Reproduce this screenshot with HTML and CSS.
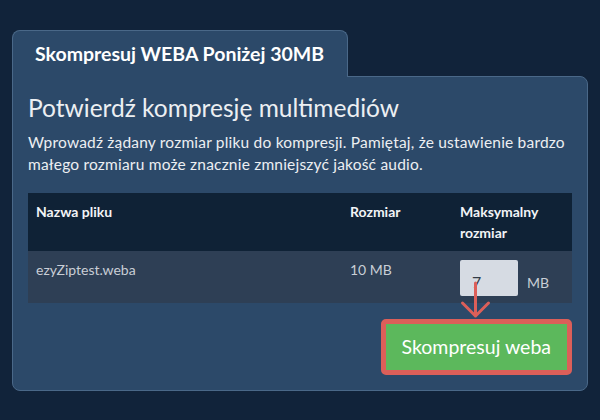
FILE: index.html
```html
<!DOCTYPE html>
<html lang="pl">
<head>
<meta charset="utf-8">
<title>Skompresuj WEBA</title>
<link rel="stylesheet" href="styles.css">
</head>
<body>
<div class="wrap">
  <div class="tab">Skompresuj WEBA Poniżej 30MB</div>
  <div class="panel">
    <h2 class="title">Potwierdź kompresję multimediów</h2>
    <p class="desc">Wprowadź żądany rozmiar pliku do kompresji. Pamiętaj, że ustawienie bardzo małego rozmiaru może znacznie zmniejszyć jakość audio.</p>
    <table class="files">
      <colgroup>
        <col class="col-name">
        <col class="col-size">
        <col class="col-max">
      </colgroup>
      <thead>
        <tr>
          <th>Nazwa pliku</th>
          <th>Rozmiar</th>
          <th>Maksymalny rozmiar</th>
        </tr>
      </thead>
      <tbody>
        <tr>
          <td>ezyZiptest.weba</td>
          <td>10 MB</td>
          <td class="c-max"><span class="field"><input class="size-input" type="text" value="7"><svg class="arrow" width="32" height="62" viewBox="0 0 32 62"><path d="M15.5 23 V56 M2.5 43 L15.5 56 L28.5 43" fill="none" stroke="#dc5f59" stroke-width="3" stroke-linecap="round" stroke-linejoin="round"/></svg></span><span class="unit">MB</span></td>
        </tr>
      </tbody>
    </table>
    <div class="actions">
      <button class="btn" type="button">Skompresuj weba</button>
    </div>
  </div>
</div>
</body>
</html>
```
FILE: styles.css
```css
html, body {
  margin: 0;
  padding: 0;
}
body {
  background: #11233a;
  font-family: Lato, "Open Sans", sans-serif;
  width: 600px;
  height: 420px;
  overflow: hidden;
}
.wrap {
  padding: 30px 12px 0 12px;
}
.tab {
  display: inline-block;
  background: #2c4969;
  border: 1px solid #4a6888;
  border-bottom: none;
  border-radius: 8px 8px 0 0;
  color: #ffffff;
  font-weight: 700;
  font-size: 19.5px;
  line-height: 24px;
  padding: 11px 23px 11px 22px;
  position: relative;
  z-index: 1;
  margin-bottom: -1px;
}
.panel {
  background: #2c4969;
  border: 1px solid #4a6888;
  border-radius: 0 8px 8px 8px;
  padding: 14px 15px 15px 15px;
}
.title {
  margin: 0;
  font-weight: 400;
  font-size: 24.5px;
  line-height: 34px;
  color: #eceff2;
}
.desc {
  margin: 6px 0 18px 0;
  font-size: 15.5px;
  line-height: 22px;
  letter-spacing: 0.2px;
  color: #eceff2;
}
.files {
  width: 100%;
  table-layout: fixed;
  border-collapse: collapse;
  font-size: 14px;
  line-height: 21px;
}
.col-name { width: 314px; }
.col-size { width: 110px; }
.col-max { width: 120px; }
.files th {
  background: #0f2236;
  color: #f2f4f6;
  font-weight: 700;
  text-align: left;
  vertical-align: top;
  padding: 8px;
}
.files td {
  background: #2e3f55;
  color: #c9ced6;
  vertical-align: top;
  padding: 8px;
}
.files td.c-max {
  padding-top: 9px;
  padding-bottom: 7px;
  white-space: nowrap;
}
.field {
  position: relative;
  display: inline-block;
  vertical-align: baseline;
}
.size-input {
  box-sizing: border-box;
  width: 58px;
  height: 36px;
  border: none;
  border-radius: 2px;
  background: #d6dbe3;
  color: #333b47;
  font-family: Lato, sans-serif;
  font-size: 16px;
  padding: 6px 12px 0 12px;
  margin: 0;
  outline: none;
  vertical-align: baseline;
}
.arrow {
  position: absolute;
  left: 0;
  top: 0;
  overflow: visible;
}
.unit {
  margin-left: 9px;
  font-size: 14px;
  color: #c9ced6;
}
.actions {
  display: flex;
  justify-content: flex-end;
  margin-top: 16px;
}
.btn {
  background: #5cb85c;
  border: 5px solid #dc5f59;
  border-radius: 5px;
  color: #ffffff;
  font-family: Lato, sans-serif;
  font-size: 19.5px;
  font-weight: 400;
  line-height: 24px;
  padding: 11px 16px 11px 16px;
  white-space: nowrap;
  cursor: pointer;
}
```
